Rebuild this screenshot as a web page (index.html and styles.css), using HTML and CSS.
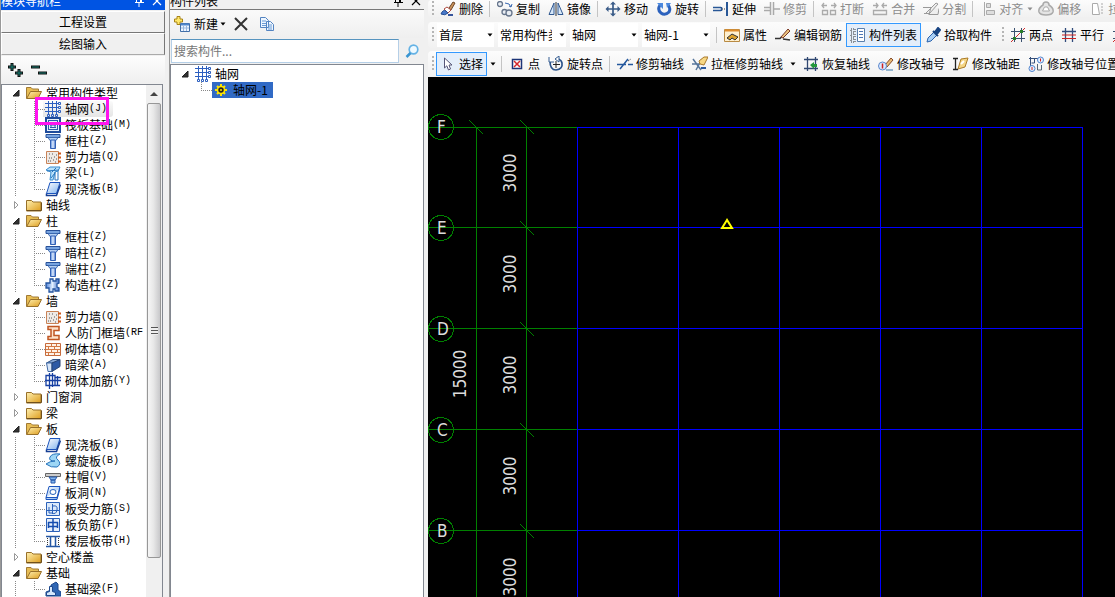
FILE: index.html
```html
<!DOCTYPE html>
<html lang="zh-CN">
<head>
<meta charset="utf-8">
<title>轴网</title>
<link rel="stylesheet" href="styles.css">
</head>
<body>
<svg class="sprite" aria-hidden="true">
  <defs>
    <linearGradient id="gold" x1="0" y1="0" x2="1" y2="1"><stop offset="0" stop-color="#fff0b0"/><stop offset="1" stop-color="#dd9c1c"/></linearGradient>
    <linearGradient id="sky" x1="0" y1="0" x2="1" y2="1"><stop offset="0" stop-color="#fff"/><stop offset="1" stop-color="#7fb2ee"/></linearGradient>
    <linearGradient id="steel"><stop offset="0" stop-color="#4d82d8"/><stop offset=".5" stop-color="#e4f0ff"/><stop offset="1" stop-color="#3a69c4"/></linearGradient>
  </defs>
  <symbol id="open" viewBox="0 0 8 8"><path d="M7 1v6H1z" fill="#333" stroke="#222"/></symbol>
  <symbol id="shut" viewBox="0 0 8 8"><path d="M2.5.5 6 4 2.5 7.500z" fill="#fff" stroke="#999"/></symbol>
  <symbol id="down" viewBox="0 0 8 8"><path d="M1.500 2.500h5L4 5.500z" fill="currentColor"/></symbol>
  <symbol id="folder" viewBox="0 0 16 16"><path d="M.5 3.500h5l1.500 1.500h8v9H.5z" fill="url(#gold)" stroke="#987029"/><path d="M1 13.500h14.500V5.500" fill="none" stroke="#70501c"/></symbol>
  <symbol id="folder-open" viewBox="0 0 16 16"><path d="M.5 13.500v-11h4.500l1.500 1.500h6v3" fill="#e7bd55" stroke="#a17a34"/><path d="M.7 13.500 4.500 6.500h11L12 13.500z" fill="url(#gold)" stroke="#98702a"/></symbol>
  <symbol id="grid" viewBox="0 0 16 16"><g fill="none" stroke="#2c5fc0"><path d="M3.500 0v13M7.500 0v13M11.500 0v13M0 2.500h13M0 6.500h13M0 10.500h13"/><path d="M13.500 1.500h2v2h-2zM13.500 5.500h2v2h-2zM13.500 9.500h2v2h-2zM2.500 13.500h2v2h-2zM6.500 13.500h2v2h-2zM10.500 13.500h2v2h-2z"/></g></symbol>
  <symbol id="raft" viewBox="0 0 16 16"><path d="M1 1h14v14H1z" fill="#e8f1fb" stroke="#1f4c9c" stroke-width="2"/><path d="M3.500 3v10M12.500 3v10M3 3.500h10M3 12.500h10M6 5v6M10 5v6M5 8h6M5 5.500h6M5 10.500h6" stroke="#2a5cab" fill="none"/></symbol>
  <symbol id="column" viewBox="0 0 16 16"><path d="M1 1.500h14v3H1z" fill="#78a4e0" stroke="#275099"/><path d="M3 4.500h10l-2 3H5z" fill="#b6d0f3" stroke="#3a68b0"/><path d="M5.500 7h5v8.500h-5z" fill="url(#steel)" stroke="#3160b5"/></symbol>
  <symbol id="shear" viewBox="0 0 16 16"><path d="M1.500 2.500h12v12h-12z" fill="#eee9e5" stroke="#c98357"/><path d="M4 9h1M7 5h1M9 8h1M5 12h1M8 11h1M11 10h1M6 9h1M10 13h1M3 12h1M11 6h1M4 5h1" stroke="#555"/><path d="M13 4.500h3M13 8.500h3M13 12.500h3" stroke="#cf5b1c" stroke-width="2"/></symbol>
  <symbol id="beam" viewBox="0 0 16 16"><path d="M1 5 5 2h10l-2 4-3 1-2 8H5l1-8z" fill="#b9e1fa" stroke="#368cd0"/><path d="m2 6 12-1M7 7l4-4M6 13l4-5M10 7v8h3V6" stroke="#2675bd" fill="none"/></symbol>
  <symbol id="slab" viewBox="0 0 16 16"><path d="M5 1.500h10L11.500 12.500h-10z" fill="url(#sky)" stroke="#1b54bd"/><path d="M1.500 12.500v2h10l4-11" fill="none" stroke="#163f94" stroke-width="1.500"/></symbol>
  <symbol id="tie" viewBox="0 0 16 16"><path d="M5 2h3v2h3V2h3v4l-2 1v3l2 1v3h-4v-2H8v3H4v-4H1V6h4z" fill="url(#steel)" stroke="#24549f" stroke-width="1.300"/></symbol>
  <symbol id="door" viewBox="0 0 16 16"><path d="M3 1.500h11v4H9v5h5v4H3v-3h3v-7H3z" fill="#fde3cc" stroke="#c05622" stroke-width="1.500"/></symbol>
  <symbol id="brick" viewBox="0 0 16 16"><path d="M.5 2.500h15v12H.5z" fill="#fff3e8" stroke="#c66b3d"/><path d="M1 5.500h14M1 8.500h14M1 11.500h14M6.500 3v2M11.500 3v2M3.500 6v2M9.500 6v2M6.500 9v2M12.500 9v2M3.500 12v2M9.500 12v2" stroke="#d37945"/></symbol>
  <symbol id="hidden-beam" viewBox="0 0 16 16"><path d="M1.500 6 8 2.500h7L9 6z" fill="#8aa9d4" stroke="#335486"/><path d="M1.500 6H7v8.500H3z" fill="#d8e6f8" stroke="#416aa5"/><path d="m7 6 8-3.500v7L7 14.500z" fill="#2d5aa5" stroke="#264373"/></symbol>
  <symbol id="rebar" viewBox="0 0 16 16"><path d="M1 2.500h9v10H1zM0 7.500h16M4.500 0v16M7.500 0v14M12.500 3v10M9 12.500h6M10 4.500h6" fill="none" stroke="#163fa2" stroke-width="1.300"/></symbol>
  <symbol id="spiral" viewBox="0 0 16 16"><path d="M15 1Q7 0 5 4t5 4Q5 8 1 11q5 4 11 3 5-3 1-7Q9 4 15 1z" fill="#9dd6f5" stroke="#2673bb"/></symbol>
  <symbol id="cap" viewBox="0 0 16 16"><path d="M.5 4.500h15v3H.5z" fill="#ccc" stroke="#666"/><path d="M4 8h8l-2 3H6zM6 11h4v3H6z" fill="#81b5ed" stroke="#2958aa"/></symbol>
  <symbol id="hole" viewBox="0 0 16 16"><path d="M4 1.500h11L12 12.500H1zM1 12.500v2h11l3-11" fill="url(#sky)" stroke="#1b54bd"/><ellipse cx="8" cy="7" rx="3" ry="2.500" fill="#fff" stroke="#2863bd"/></symbol>
  <symbol id="force" viewBox="0 0 16 16"><path d="M1.500 1.500h13v13h-13z" fill="#dceafa" stroke="#2b61b9"/><path d="M2 9.500h12M7.500 3v10M4 6v6h4M8 5q5-1 4 4t-5 3" fill="none" stroke="#2b61b9"/></symbol>
  <symbol id="negative" viewBox="0 0 16 16"><path d="M1.500 1.500h13v13h-13z" fill="#e5effc" stroke="#2b61b9"/><path d="M8 2v12M3 5.500h10M3 9.500h10M3.500 5v6M12.500 5v6" fill="none" stroke="#164eb0" stroke-width="1.500"/></symbol>
  <symbol id="strip" viewBox="0 0 16 16"><path d="M1 3.500h14M1 13.500h14M5.500 4v9M10.500 4v9" stroke="#2457a4" stroke-width="1.500"/><path d="M2.500 5v8M13.500 5v8" stroke="#333" stroke-dasharray="1 1"/></symbol>
  <symbol id="foundation" viewBox="0 0 16 16"><path d="M1 15v-4l5-2V4l5-3 2 2v6l3 2v4z" fill="#2f66b4" stroke="#1b478c"/><path d="M1.500 14.500v-3l3-1V5.500h3v5l3 1v3z" fill="#d5e8fc" stroke="#1b478c"/></symbol>
  <symbol id="new" viewBox="0 0 16 16"><path d="M3 .5h3V3h2.500v3H6v2.500H3V6H.5V3H3z" fill="#ffe86a" stroke="#a88314"/><path d="M6.500 7.500h9v8h-9z" fill="#eef5ff" stroke="#426fa8"/><path d="M7 8.500h8" stroke="#4f86cd" stroke-width="2"/><path d="M7 12h8M9.500 10v5M12.500 10v5" stroke="#9ab8de"/></symbol>
  <symbol id="x" viewBox="0 0 16 16"><path d="m2 2 12 12M14 2 2 14" stroke="#333" stroke-width="2"/></symbol>
  <symbol id="close" viewBox="0 0 16 16"><path d="m4 4 8 8M12 4l-8 8" stroke="currentColor" stroke-width="1.200"/></symbol>
  <symbol id="pin" viewBox="0 0 16 16"><path d="M5.500 2v7M9.500 2v7M10.500 2v7M4 9.500h9M8 10v4M5 2.500h5" stroke="currentColor"/></symbol>
  <symbol id="pages" viewBox="0 0 16 16"><path d="M1.500 1.500h5l3 3v7h-8zM7.500 5.500h4l3 3v6h-7z" fill="#eef6ff" stroke="#5484c1"/><path d="M3 5h4M3 7.500h4M3 9.500h4M9 9h4M9 11h4M9 13h4" stroke="#6b9bd5"/></symbol>
  <symbol id="search" viewBox="0 0 16 16"><circle cx="9.500" cy="6.500" r="4.300" fill="#eef9ff" stroke="#64b2e5" stroke-width="1.700"/><path d="m6.500 10-4 4" stroke="#3995d2" stroke-width="2.500"/></symbol>
  <symbol id="sun" viewBox="0 0 16 16"><path d="M8 2v12M2 8h12M4 4l8 8M12 4l-8 8" stroke="#ffe600" stroke-width="2"/><circle cx="8" cy="8" r="3.500" fill="#222" stroke="#ffe600" stroke-width="1.500"/><circle cx="8" cy="8" r="1" fill="#ffe600"/></symbol>
  <symbol id="brush" viewBox="0 0 16 16"><path d="m9 7 4-6 2 1-4 7z" fill="#c9925a" stroke="#6c4627"/><path d="m4 8 3-2 4 3-3 3z" fill="#fff" stroke="#ae4b40"/><path d="M1 13q2-5 5-3l2 2q-3 3-7 1z" fill="#4979ca" stroke="#244d93"/><path d="M8 14h5" stroke="#36549b" stroke-width="2"/></symbol>
  <symbol id="copy" viewBox="0 0 16 16"><g fill="#e9edf3" stroke="#65748b" stroke-width="1.300"><circle cx="3" cy="3" r="2.500"/><circle cx="7.500" cy="11" r="2.500"/><circle cx="12" cy="12" r="3"/></g><path d="M8 2q5 0 6 4M12 5l2 1 1-3" fill="none" stroke="#3867b0"/></symbol>
  <symbol id="mirror" viewBox="0 0 16 16"><path d="M6 2v11.500H1zM10 2v11.500h5z" fill="#d6e7f8" stroke="#305890"/><path d="M8 1v14" stroke="#333"/></symbol>
  <symbol id="move" viewBox="0 0 16 16"><path d="M8 2v12M2 8h12" stroke="#395b88" stroke-width="1.700"/><path d="m5 3.500 3-3 3 3zM5 12.500l3 3 3-3zM3.500 5l-3 3 3 3zM12.500 5l3 3-3 3z" fill="#395b88"/></symbol>
  <symbol id="rotate" viewBox="0 0 16 16"><path d="M4 4q-3 5 1 8t8-1q2-4-1-7" fill="none" stroke="#2c62bd" stroke-width="3"/><path d="M1 2h6v6zM10 2h5l-4 5z" fill="#4d89dd"/></symbol>
  <symbol id="extend" viewBox="0 0 16 16"><path d="M0 6.500h8M0 9.500h8M8.500 6v4" stroke="#285796" stroke-width="1.500"/><path d="M9 8h3" stroke="#333" stroke-dasharray="1 1"/><path d="M14 1v14" stroke="#285796" stroke-width="2"/></symbol>
  <symbol id="trim" viewBox="0 0 16 16"><path d="M6.500 1v13M9.500 1v13M0 6.500h6M0 9.500h6M10 8h6" stroke="#aaa" stroke-width="1.500"/></symbol>
  <symbol id="break" viewBox="0 0 16 16"><path d="M1.500 9.500h5v4h-5zM9.500 9.500h5v4h-5zM1 4.500h5M10 4.500h5M3 2 1 4.500 3 7M13 2l2 2.500L13 7" fill="none" stroke="#aaa" stroke-width="1.300"/></symbol>
  <symbol id="merge" viewBox="0 0 16 16"><path d="M1.500 9.500h13v4h-13zM1 4.500h5M10 4.500h5M4 2l2 2.500L4 7M12 2l-2 2.500L12 7" fill="none" stroke="#aaa" stroke-width="1.300"/></symbol>
  <symbol id="split" viewBox="0 0 16 16"><path d="M0 6.500h8l-2 7h9l1-6M3 12 13 2l2 1-9 10zM1 12.500h6" fill="#eee" stroke="#999"/></symbol>
  <symbol id="align" viewBox="0 0 16 16"><path d="M4.500 1v14M6.500 2.500h4v4h-4zM6.500 9.500h8v4h-8z" fill="#ddd" stroke="#aaa"/></symbol>
  <symbol id="offset" viewBox="0 0 16 16"><path d="M5 4a3 3 0 0 1 6 0q5 3 4 7-1 3-7 3t-7-3q-1-4 4-7z" fill="#e4e4e4" stroke="#aaa" stroke-width="1.500"/><path d="M6.500 6h3l2 4h-7z" fill="#fff" stroke="#aaa"/></symbol>
  <symbol id="pull" viewBox="0 0 16 16"><path d="M3.500 2.500h5l2 11h-7z" fill="#fff" stroke="#aaa"/><path d="M13 2v12" stroke="#aaa" stroke-dasharray="2 1"/></symbol>
  <symbol id="props" viewBox="0 0 16 16"><path d="M.5 2.500h15v12H.5z" fill="#fff0cf" stroke="#b98a42"/><path d="M1 3.500h14" stroke="#e08c2c" stroke-width="2"/><path d="m3 11 5-4 6 3-3 3-3-2-2 2z" fill="#dda12b" stroke="#333"/></symbol>
  <symbol id="edit-bar" viewBox="0 0 16 16"><path d="M0 11.500h5l2-2M8 12l7 1" stroke="#333" stroke-width="1.500" fill="none"/><path d="m6 10 7-8 2 2-7 7z" fill="#eac27d" stroke="#7b3a2a"/></symbol>
  <symbol id="list" viewBox="0 0 16 16"><path d="M7.500 1.500h7v13h-7z" fill="#fff" stroke="#5a7fac"/><path d="M9 4.500h4M9 7.500h4M9 10.500h4" stroke="#4e78b6"/><path d="M1 2h4v3H1zM1 7h4v3H1zM1 12h4v3H1z" fill="none" stroke="#333" stroke-dasharray="1 1"/></symbol>
  <symbol id="dropper" viewBox="0 0 16 16"><path d="m3 11 6-6 3 3-6 6-4 1z" fill="#a9cff5" stroke="#2d64ad"/><path d="m8 4 5 5M10 5l3-4 2 2-3 4z" fill="#174382" stroke="#174382" stroke-width="2"/></symbol>
  <symbol id="two-points" viewBox="0 0 16 16"><path d="M4.500 1v14M11.500 1v14M1 4.500h14M1 11.500h14" stroke="#3a506f"/><path d="M1 15 15 1" stroke="#d02828"/><path d="M3 10h3v3H3zM10 3h3v3h-3z" fill="#287d28"/></symbol>
  <symbol id="parallel" viewBox="0 0 16 16"><path d="M4.500 1v14M11.500 1v14M1 4.500h14" stroke="#314c7c" stroke-width="1.300"/><path d="M1 8h14M1 11.500h14" stroke="#c22"/></symbol>
  <symbol id="cursor" viewBox="0 0 16 16"><path d="M4.500 2v10l2.300-2.200L8.500 14l2-1L9 9h3z" fill="#fff" stroke="#557"/></symbol>
  <symbol id="point" viewBox="0 0 16 16"><path d="M3.500 3.500h9v9h-9z" fill="#fff" stroke="#1c3477" stroke-width="1.500"/><path d="m5 5 6 6M11 5l-6 6" stroke="#d3282c" stroke-width="1.500"/></symbol>
  <symbol id="rotate-point" viewBox="0 0 16 16"><path d="M2 5q0 9 6 9 7-1 6-7-1-4-5-4" fill="none" stroke="#2a5289" stroke-width="1.700"/><path d="M8 5v7M5 8.500h7" stroke="#222"/><path d="M1 1v5h5M7 3l4-3v6z" fill="#fff" stroke="#345d91"/></symbol>
  <symbol id="trim-axis" viewBox="0 0 16 16"><path d="M0 8.500h9M3 13l8-10M11 8.500h5" stroke="#23579d" stroke-width="1.500"/><path d="M11 5l3-2" stroke="#333" stroke-dasharray="1 1"/></symbol>
  <symbol id="box-trim" viewBox="0 0 16 16"><path d="m1 3 8 11M10 3 4 14M0 8h8" stroke="#58779c" stroke-width="1.500"/><path d="m7 5 5-4h4l-4 8-4-1z" fill="#f8d883" stroke="#a8792c"/><path d="M9 12h5" stroke="#2a5aa0" stroke-width="2"/></symbol>
  <symbol id="restore" viewBox="0 0 16 16"><path d="M4.500 1v14M12.500 1v14M1 3.500h14M1 12.500h14" stroke="#304872" stroke-width="1.300"/><path d="m7 9 4-3v2h3v3h-3v2z" fill="#24983c"/></symbol>
  <symbol id="edit-no" viewBox="0 0 16 16"><path d="m7 9 6-7 2 2-6 7-3 1z" fill="#e8bb75" stroke="#854a2a"/><circle cx="4.500" cy="10" r="4" fill="#dceaff" stroke="#5b88cc"/><path d="M4.500 7.500v5" stroke="#c22" stroke-width="1.500"/><path d="M8 14h7" stroke="#37a"/></symbol>
  <symbol id="edit-dist" viewBox="0 0 16 16"><path d="M2.500 2v12M0 2.500h5M0 13.500h5" stroke="#222" stroke-width="1.300"/><path d="m8 3 7-1-3 9-7 2z" fill="#f5d686" stroke="#ac7c26"/><path d="m8 8 3-3" stroke="#fff" stroke-width="2"/></symbol>
  <symbol id="edit-pos" viewBox="0 0 16 16"><path d="M1 2.500h9M2.500 1v10M6.500 3v4h-3" stroke="#344f7b" fill="none"/><circle cx="12.500" cy="4" r="3" fill="#e5f1ff" stroke="#4e83ce"/><circle cx="4" cy="12.500" r="3" fill="#e5f1ff" stroke="#4e83ce"/><path d="M12.500 2.500v3M4 11v3" stroke="#c22"/><path d="M9.500 8v6h4V9" fill="none" stroke="#567"/></symbol>
</svg>

<div class="app">
  <aside class="nav">
    <header class="caption caption-blue"><span>模块导航栏</span><svg class="ico"><use href="#pin"/></svg><svg class="ico"><use href="#close"/></svg></header>
    <button class="stage">工程设置</button>
    <button class="stage flat">绘图输入</button>
    <div class="expanders">
      <button aria-label="展开"><svg class="wide" viewBox="0 0 18 16"><path d="M1 5h8M5 1v8M8 11h8M12 7v8" stroke="#111" stroke-width="3"/><path d="M2 5h6M5 2v6M9 11h6M12 8v6" stroke="#167d72"/></svg></button>
      <button aria-label="折叠"><svg class="wide" viewBox="0 0 18 16"><path d="M1 5h9M8 11h9" stroke="#111" stroke-width="3"/><path d="M2 5h7M9 11h7" stroke="#167d72"/></svg></button>
    </div>
    <div class="tree-box">
      <ul class="tree">
        <li><div class="group"><svg class="arrow"><use href="#open"/></svg><svg class="ico"><use href="#folder-open"/></svg>常用构件类型</div>
          <ul>
            <li class="current"><svg class="ico"><use href="#grid"/></svg>轴网<i>(J)</i></li>
            <li><svg class="ico"><use href="#raft"/></svg>筏板基础<i>(M)</i></li>
            <li><svg class="ico"><use href="#column"/></svg>框柱<i>(Z)</i></li>
            <li><svg class="ico"><use href="#shear"/></svg>剪力墙<i>(Q)</i></li>
            <li><svg class="ico"><use href="#beam"/></svg>梁<i>(L)</i></li>
            <li><svg class="ico"><use href="#slab"/></svg>现浇板<i>(B)</i></li>
          </ul></li>
        <li><div class="group"><svg class="arrow"><use href="#shut"/></svg><svg class="ico"><use href="#folder"/></svg>轴线</div></li>
        <li><div class="group"><svg class="arrow"><use href="#open"/></svg><svg class="ico"><use href="#folder-open"/></svg>柱</div>
          <ul>
            <li><svg class="ico"><use href="#column"/></svg>框柱<i>(Z)</i></li>
            <li><svg class="ico"><use href="#column"/></svg>暗柱<i>(Z)</i></li>
            <li><svg class="ico"><use href="#column"/></svg>端柱<i>(Z)</i></li>
            <li><svg class="ico"><use href="#tie"/></svg>构造柱<i>(Z)</i></li>
          </ul></li>
        <li><div class="group"><svg class="arrow"><use href="#open"/></svg><svg class="ico"><use href="#folder-open"/></svg>墙</div>
          <ul>
            <li><svg class="ico"><use href="#shear"/></svg>剪力墙<i>(Q)</i></li>
            <li><svg class="ico"><use href="#door"/></svg>人防门框墙<i>(RF</i></li>
            <li><svg class="ico"><use href="#brick"/></svg>砌体墙<i>(Q)</i></li>
            <li><svg class="ico"><use href="#hidden-beam"/></svg>暗梁<i>(A)</i></li>
            <li><svg class="ico"><use href="#rebar"/></svg>砌体加筋<i>(Y)</i></li>
          </ul></li>
        <li><div class="group"><svg class="arrow"><use href="#shut"/></svg><svg class="ico"><use href="#folder"/></svg>门窗洞</div></li>
        <li><div class="group"><svg class="arrow"><use href="#shut"/></svg><svg class="ico"><use href="#folder"/></svg>梁</div></li>
        <li><div class="group"><svg class="arrow"><use href="#open"/></svg><svg class="ico"><use href="#folder-open"/></svg>板</div>
          <ul>
            <li><svg class="ico"><use href="#slab"/></svg>现浇板<i>(B)</i></li>
            <li><svg class="ico"><use href="#spiral"/></svg>螺旋板<i>(B)</i></li>
            <li><svg class="ico"><use href="#cap"/></svg>柱帽<i>(V)</i></li>
            <li><svg class="ico"><use href="#hole"/></svg>板洞<i>(N)</i></li>
            <li><svg class="ico"><use href="#force"/></svg>板受力筋<i>(S)</i></li>
            <li><svg class="ico"><use href="#negative"/></svg>板负筋<i>(F)</i></li>
            <li><svg class="ico"><use href="#strip"/></svg>楼层板带<i>(H)</i></li>
          </ul></li>
        <li><div class="group"><svg class="arrow"><use href="#shut"/></svg><svg class="ico"><use href="#folder"/></svg>空心楼盖</div></li>
        <li><div class="group"><svg class="arrow"><use href="#open"/></svg><svg class="ico"><use href="#folder-open"/></svg>基础</div>
          <ul>
            <li><svg class="ico"><use href="#foundation"/></svg>基础梁<i>(F)</i></li>
          </ul></li>
      </ul>
      <div class="scroll"><svg class="up" viewBox="0 0 8 8"><path d="M0 6h8L4 2z" fill="#444"/></svg><div class="thumb"></div><div class="rest"></div></div>
      <div class="marker"></div>
    </div>
  </aside>

  <section class="parts">
    <header class="caption"><span>构件列表</span><svg class="ico"><use href="#pin"/></svg><svg class="ico"><use href="#close"/></svg></header>
    <div class="part-tools">
      <button><svg class="ico"><use href="#new"/></svg>新建<svg class="arrow"><use href="#down"/></svg></button>
      <button aria-label="删除"><svg class="ico"><use href="#x"/></svg></button>
      <button aria-label="复制"><svg class="ico"><use href="#pages"/></svg></button>
    </div>
    <div class="search"><input type="text" aria-label="搜索构件" placeholder="搜索构件..."><button aria-label="搜索"><svg class="ico"><use href="#search"/></svg></button></div>
    <ul class="tree part-list">
      <li><div class="group"><svg class="arrow"><use href="#open"/></svg><svg class="ico"><use href="#grid"/></svg>轴网</div>
        <ul><li><span class="picked"><svg class="ico"><use href="#sun"/></svg>轴网-1</span></li></ul></li>
    </ul>
  </section>

  <main class="work">
    <div class="bar bar-top">
      <span class="grip"></span>
      <button><svg class="ico"><use href="#brush"/></svg>删除</button><hr>
      <button><svg class="ico"><use href="#copy"/></svg>复制</button>
      <button><svg class="ico"><use href="#mirror"/></svg>镜像</button><hr>
      <button><svg class="ico"><use href="#move"/></svg>移动</button>
      <button><svg class="ico"><use href="#rotate"/></svg>旋转</button><hr>
      <button><svg class="ico"><use href="#extend"/></svg>延伸</button>
      <button disabled><svg class="ico"><use href="#trim"/></svg>修剪</button><hr>
      <button disabled><svg class="ico"><use href="#break"/></svg>打断</button>
      <button disabled><svg class="ico"><use href="#merge"/></svg>合并</button>
      <button disabled><svg class="ico"><use href="#split"/></svg>分割</button><hr>
      <button class="has-menu" disabled><svg class="ico"><use href="#align"/></svg>对齐<svg class="arrow"><use href="#down"/></svg></button>
      <button disabled><svg class="ico"><use href="#offset"/></svg>偏移</button>
      <button disabled><svg class="ico"><use href="#pull"/></svg>拉伸</button>
    </div>
    <div class="bar">
      <span class="grip"></span>
      <label class="combo narrow"><select aria-label="楼层"><option>首层</option></select><svg class="arrow"><use href="#down"/></svg></label>
      <label class="combo"><select aria-label="构件类型"><option>常用构件类型</option></select><svg class="arrow"><use href="#down"/></svg></label>
      <label class="combo"><select aria-label="构件种类"><option>轴网</option></select><svg class="arrow"><use href="#down"/></svg></label>
      <label class="combo"><select aria-label="构件"><option>轴网-1</option></select><svg class="arrow"><use href="#down"/></svg></label><hr>
      <button><svg class="ico"><use href="#props"/></svg>属性</button>
      <button><svg class="ico"><use href="#edit-bar"/></svg>编辑钢筋</button>
      <button class="on"><svg class="ico"><use href="#list"/></svg>构件列表</button>
      <button><svg class="ico"><use href="#dropper"/></svg>拾取构件</button>
      <span class="grip second"></span>
      <button><svg class="ico"><use href="#two-points"/></svg>两点</button>
      <button><svg class="ico"><use href="#parallel"/></svg>平行</button>
      <button><svg class="ico"><use href="#two-points"/></svg>点角</button>
    </div>
    <div class="bar">
      <span class="grip"></span>
      <button class="on"><svg class="ico"><use href="#cursor"/></svg>选择</button><svg class="arrow drop"><use href="#down"/></svg><hr>
      <button><svg class="ico"><use href="#point"/></svg>点</button>
      <button><svg class="ico"><use href="#rotate-point"/></svg>旋转点</button><hr>
      <button><svg class="ico"><use href="#trim-axis"/></svg>修剪轴线</button>
      <button><svg class="ico"><use href="#box-trim"/></svg>拉框修剪轴线</button><svg class="arrow drop"><use href="#down"/></svg>
      <button><svg class="ico"><use href="#restore"/></svg>恢复轴线</button>
      <button><svg class="ico"><use href="#edit-no"/></svg>修改轴号</button>
      <button><svg class="ico"><use href="#edit-dist"/></svg>修改轴距</button>
      <button><svg class="ico"><use href="#edit-pos"/></svg>修改轴号位置</button>
    </div>
    <svg class="drawing" role="img" aria-label="轴网图">
      <g class="axes">
        <path d="M0 50.500h149M0 150.500h149M0 251.500h149M0 352.500h149M0 453.500h149M48.500 50v560M98.500 50v560"/>
        <g class="thin"><path d="m41 43 14 14M92 43l14 14M92 144l14 14M92 245l14 14M92 346l14 14M92 447l14 14"/>
        <circle cx="13" cy="50" r="12.500"/><circle cx="13" cy="151" r="12.500"/><circle cx="13" cy="252" r="12.500"/><circle cx="13" cy="353" r="12.500"/><circle cx="13" cy="454" r="12.500"/></g>
      </g>
      <path class="lines" d="M149 50.500h506M149 150.500h506M149 251.500h506M149 352.500h506M149 453.500h506M149.500 50v560M250.500 50v560M351.500 50v560M452.500 50v560M553.500 50v560M654.500 50v560"/>
      <path class="origin" d="m299 143-5 8h10z"/>
      <g class="names"><text x="9" y="56">F</text><text x="9" y="157">E</text><text x="9" y="258">D</text><text x="9" y="359">C</text><text x="9" y="460">B</text></g>
      <g class="sizes">
        <text transform="translate(88 96) rotate(-90)">3000</text>
        <text transform="translate(88 197) rotate(-90)">3000</text>
        <text transform="translate(88 298) rotate(-90)">3000</text>
        <text transform="translate(88 399) rotate(-90)">3000</text>
        <text transform="translate(88 500) rotate(-90)">3000</text>
        <text transform="translate(38 297) rotate(-90)">15000</text>
      </g>
    </svg>
  </main>
</div>
</body>
</html>
```

FILE: styles.css
```css
* { box-sizing: border-box; }
body {
  margin: 0;
  background: #f0f0f0;
  color: #000;
  font: 12px/16px "Noto Sans CJK SC", sans-serif;
}
ul { list-style: none; margin: 0; padding: 0; }
button {
  display: flex;
  align-items: center;
  padding: 0;
  border: 0;
  background: none;
  color: inherit;
  font: inherit;
  white-space: nowrap;
}
svg { display: block; flex: none; }
.sprite { position: absolute; width: 0; height: 0; }
.ico { width: 16px; height: 16px; }
.arrow { width: 8px; height: 8px; }

.app {
  display: grid;
  grid-template-columns: 165px 255px minmax(0, 1fr);
  column-gap: 4px;
  height: 100vh;
  overflow: hidden;
}

/* Panel captions */
.caption {
  display: flex;
  align-items: flex-end;
  height: 10px;
  overflow: hidden;
  border-bottom: 1px solid #777;
}
.caption span { flex: 1; }
.caption-blue { background: #0054e3; color: #fff; border-color: #0054e3; }
.caption .ico { margin-left: 2px; }

/* Module navigation */
.nav {
  display: flex;
  flex-direction: column;
  min-height: 0;
  border-left: 1px solid #999;
}
.stage {
  justify-content: center;
  height: 22px;
  margin-top: 1px;
  border: 1px solid;
  border-color: #fff #777 #777 #fff;
  background: #f0f0f0;
}
.stage.flat { margin-top: 0; border-bottom-color: #aaa; }
.expanders {
  display: flex;
  align-items: center;
  gap: 5px;
  height: 27px;
  margin: 1px 0;
  padding-left: 6px;
  background: linear-gradient(#fdfdfd, #efefef);
}
.wide { width: 18px; height: 16px; }
.tree-box {
  position: relative;
  display: grid;
  grid-template-columns: minmax(0, 1fr) 16px;
  flex: 1;
  min-height: 0;
  margin-right: 2px;
  border: 1px solid #828790;
  border-bottom: 0;
  background: #fff;
}

/* Trees */
.tree { overflow: hidden; padding-right: 3px; white-space: nowrap; }
.tree li > ul {
  padding-left: 32px;
  background: linear-gradient(#888 50%, transparent 50%) 13px 0 / 1px 2px repeat-y;
}
.group { display: flex; align-items: center; height: 16px; padding-left: 10px; }
.group .ico { margin: 0 4px 0 1px; }
.group .arrow + .ico { margin-left: 6px; }
.tree ul li { display: flex; align-items: center; height: 16px; }
.tree ul li::before {
  content: "";
  align-self: flex-start;
  width: 11px;
  height: 16px;
  background:
    linear-gradient(#888 50%, transparent 50%) 0 0 / 1px 2px repeat-y,
    linear-gradient(90deg, #888 50%, transparent 50%) 0 8px / 2px 1px repeat-x;
}
.tree ul li:last-child::before { height: 9px; }
.tree ul .ico { margin-right: 4px; }
.tree i { font: 10px/16px "Liberation Mono", monospace; }
.current {
  width: 79px;
  background: linear-gradient(#fafafa, #e5e5e5) 9px 0 no-repeat;
  border-radius: 3px;
}
.marker {
  position: absolute;
  left: 33px;
  top: 12px;
  width: 74px;
  height: 28px;
  border: 3px solid #ff14ee;
}
.scroll {
  display: flex;
  flex-direction: column;
  background: #f0f0f0;
}
.up { width: 8px; height: 8px; margin: 5px 4px; }
.thumb {
  flex: 455;
  margin: 0 1px;
  border: 1px solid #979797;
  border-radius: 2px;
  background:
    repeating-linear-gradient(#555 0 1px, #eee 1px 3px) center / 7px 8px no-repeat,
    linear-gradient(90deg, #f6f6f6, #e8e8e8 45%, #c8c8ca);
}
.rest { flex: 39; }

/* Component list */
.parts { display: flex; flex-direction: column; min-height: 0; border-left: 1px solid #999; }
.part-tools {
  display: flex;
  align-items: center;
  gap: 6px;
  height: 28px;
  padding-left: 4px;
  background: linear-gradient(#fafafa, #efefef);
}
.part-tools .ico { margin-right: 4px; }
.part-tools .arrow { margin-left: 1px; }
.search { display: flex; align-items: center; height: 26px; }
.search input {
  flex: 1;
  min-width: 0;
  height: 24px;
  margin-left: 1px;
  padding: 0 2px 2px;
  border: 1px solid #b5cfe7;
  border-top-color: #5794bf;
  background: #fff;
  font: inherit;
}
.search input::placeholder { color: #777; opacity: 1; }
.search button { justify-content: center; width: 25px; }
.part-list {
  flex: 1;
  padding-top: 1px;
  border: 1px solid #828790;
  border-bottom: 0;
  background: #fff;
}
.part-list li > ul { padding-left: 30px; background: none; }
.picked {
  display: flex;
  align-items: center;
  height: 16px;
  padding: 0 5px 0 1px;
  background: #316ac5;
}

/* Toolbars */
.work { display: flex; flex-direction: column; min-width: 0; }
.bar {
  display: flex;
  align-items: center;
  height: 26px;
  margin-bottom: 3px;
  overflow: hidden;
  border-radius: 4px 0 0 4px;
  background: linear-gradient(#fcfcfc, #f1f1f1);
}
.bar-top { height: 17px; margin-bottom: 5px; }
.bar:nth-child(3) { margin-bottom: 0; }
.bar button {
  flex: none;
  gap: 3px;
  height: 24px;
  padding: 0 4px;
}
.bar button:disabled { color: #8c8c8c; }
.bar .has-menu { padding-right: 0; }
.bar button.on { border: 1px solid #3399ff; padding: 0 3px; background: #e4eefa; }
.bar hr {
  flex: none;
  width: 1px;
  height: 16px;
  margin: 0 3px 0 2px;
  border: 0;
  background: #c4c4c4;
}
.grip {
  flex: none;
  width: 2px;
  height: 16px;
  margin: 0 2px 0 4px;
  background: repeating-linear-gradient(#b5b5b5 0 2px, transparent 2px 4px);
}
.grip.second { margin: 0 2px 0 6px; }
.drop { margin: 0 2px; }
.combo {
  display: flex;
  align-items: center;
  flex: none;
  width: 68px;
  height: 24px;
  margin-right: 4px;
  background: #fff;
}
.combo.narrow { width: 57px; margin-left: 1px; }
.combo select {
  appearance: none;
  flex: 1;
  min-width: 0;
  height: 24px;
  margin-right: 6px;
  padding: 0 0 0 2px;
  border: 0;
  background: #fff;
  color: #000;
  font: inherit;
}

/* Drawing area */
.drawing { flex: 1; width: 100%; min-height: 0; background: #000; }
.axes, .lines { fill: none; shape-rendering: crispEdges; }
.axes { stroke: #008000; }
.lines { stroke: #0000ff; }
.origin { fill: none; stroke: #ffff00; stroke-width: 2; }
.names, .sizes {
  fill: #dcdcdc;
  font-family: "DejaVu Sans Condensed", "Noto Sans", sans-serif;
  font-size: 17px;
}
.sizes { text-anchor: middle; }
```
